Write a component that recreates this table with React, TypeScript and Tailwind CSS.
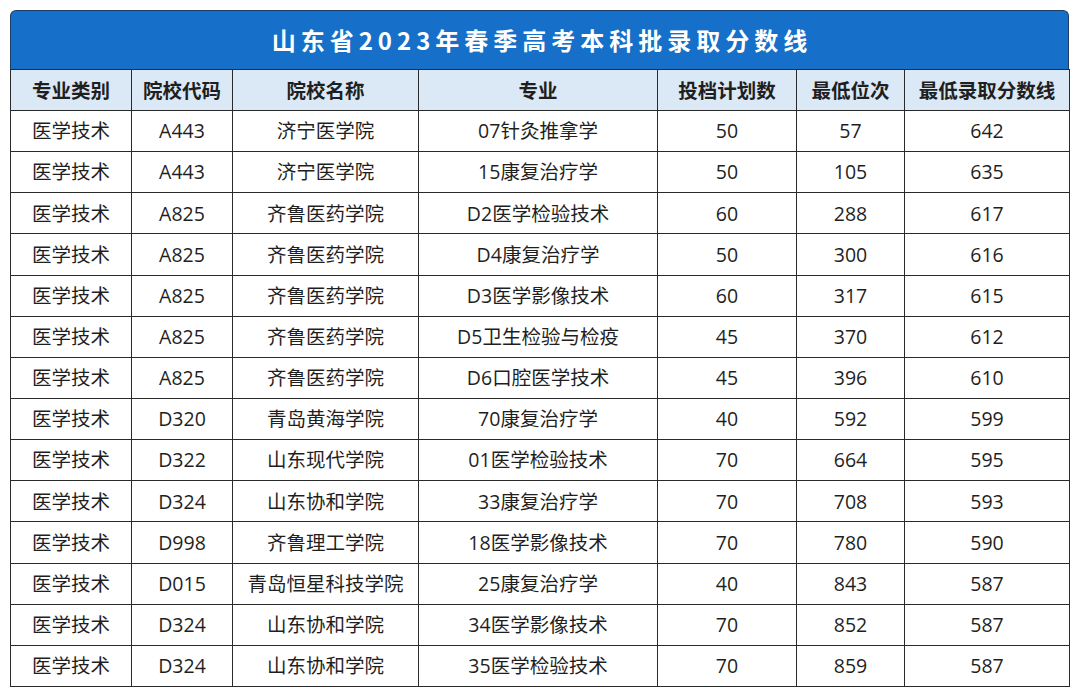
import React from "react";

const rows: string[][] = [
  ["医学技术", "A443", "济宁医学院", "07针灸推拿学", "50", "57", "642"],
  ["医学技术", "A443", "济宁医学院", "15康复治疗学", "50", "105", "635"],
  ["医学技术", "A825", "齐鲁医药学院", "D2医学检验技术", "60", "288", "617"],
  ["医学技术", "A825", "齐鲁医药学院", "D4康复治疗学", "50", "300", "616"],
  ["医学技术", "A825", "齐鲁医药学院", "D3医学影像技术", "60", "317", "615"],
  ["医学技术", "A825", "齐鲁医药学院", "D5卫生检验与检疫", "45", "370", "612"],
  ["医学技术", "A825", "齐鲁医药学院", "D6口腔医学技术", "45", "396", "610"],
  ["医学技术", "D320", "青岛黄海学院", "70康复治疗学", "40", "592", "599"],
  ["医学技术", "D322", "山东现代学院", "01医学检验技术", "70", "664", "595"],
  ["医学技术", "D324", "山东协和学院", "33康复治疗学", "70", "708", "593"],
  ["医学技术", "D998", "齐鲁理工学院", "18医学影像技术", "70", "780", "590"],
  ["医学技术", "D015", "青岛恒星科技学院", "25康复治疗学", "40", "843", "587"],
  ["医学技术", "D324", "山东协和学院", "34医学影像技术", "70", "852", "587"],
  ["医学技术", "D324", "山东协和学院", "35医学检验技术", "70", "859", "587"],
];

const headers = ["专业类别", "院校代码", "院校名称", "专业", "投档计划数", "最低位次", "最低录取分数线"];
const widths = ["w-[121px]", "w-[101px]", "w-[186px]", "w-[239px]", "w-[139px]", "w-[108px]", "w-[165px]"];

export default function App() {
  return (
    <div
      className="w-[1080px] h-[697px] bg-white pt-[10px] pl-[10px]"
      style={{ fontFamily: '"Open Sans", "Noto Sans CJK SC", sans-serif' }}
    >
      <div className="w-[1059px]">
        <div className="h-[59px] bg-[#1670c9] border-[1.5px] border-b-0 border-[#1d3d66] rounded-t-[6px] flex items-center justify-center">
          <span
            className="text-white text-[24px] font-bold tracking-[5px] pl-[5px]"
            style={{ fontFamily: '"Noto Sans CJK SC", sans-serif' }}
          >
            山东省2023年春季高考本科批录取分数线
          </span>
        </div>
        <table className="w-[1059px] border-collapse table-fixed text-[#1f1f1f]">
          <thead>
            <tr className="h-[41px] bg-[#dbe8f5]">
              {headers.map((h, i) => (
                <th
                  key={i}
                  className={`${widths[i]} border-[1.5px] border-[#2a2a2a] text-[19.5px] font-bold text-center p-0`}
                  style={{ fontFamily: '"Noto Sans CJK SC", sans-serif' }}
                >
                  {h}
                </th>
              ))}
            </tr>
          </thead>
          <tbody>
            {rows.map((r, ri) => (
              <tr key={ri} className="h-[41.15px]">
                {r.map((c, ci) => (
                  <td key={ci} className="border-[1.5px] border-[#2a2a2a] text-[19.5px] text-center p-0 leading-none">
                    {c}
                  </td>
                ))}
              </tr>
            ))}
          </tbody>
        </table>
      </div>
    </div>
  );
}
